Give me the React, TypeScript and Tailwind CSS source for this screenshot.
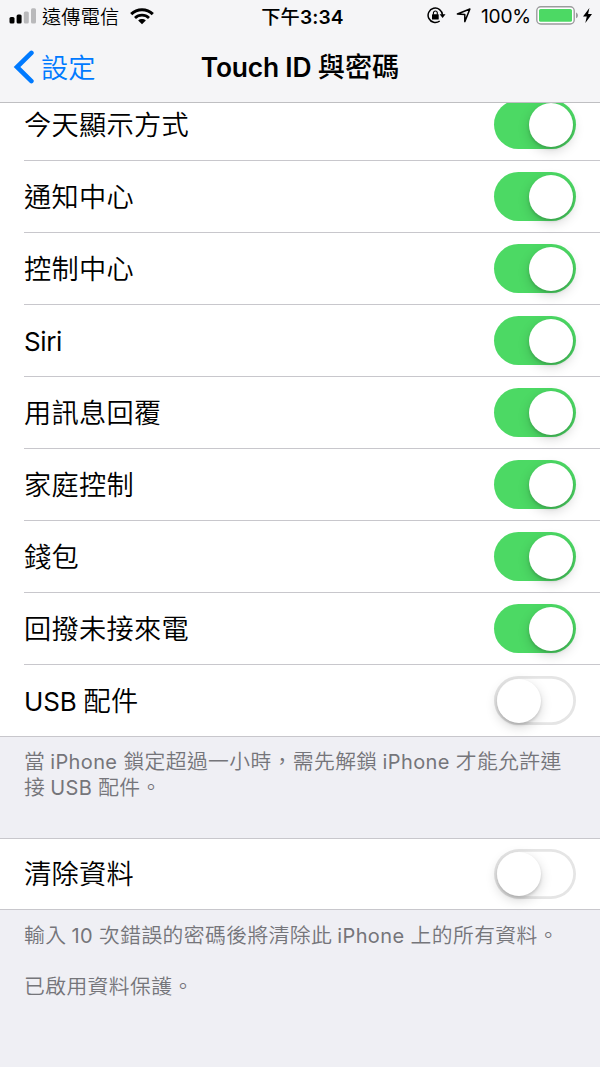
import type { ReactNode } from "react";

const CJK = "font-['Noto_Sans_CJK_TC',sans-serif]";

function La({ children, className = "font-normal" }: { children: ReactNode; className?: string }) {
  return <span className={`font-['Inter','Noto_Sans_CJK_TC',sans-serif] leading-none ${className}`}>{children}</span>;
}

function Toggle({ on }: { on: boolean }) {
  return (
    <span
      role="switch"
      aria-checked={on}
      className={
        on
          ? "flex h-[49.6px] w-[81.6px] shrink-0 items-center justify-end rounded-full bg-[#4cd964] px-[2.6px]"
          : "flex h-[49.6px] w-[81.6px] shrink-0 items-center justify-start rounded-full bg-white shadow-[inset_0_0_0_2.8px_#e5e5e5] px-[2.6px]"
      }
    >
      <span className="size-[44px] rounded-full bg-white shadow-[0_4px_12px_rgba(0,0,0,0.17),0_2px_3px_rgba(0,0,0,0.14)]" />
    </span>
  );
}

function Row({ label, on, last = false, height = "h-[72px]" }: { label: ReactNode; on: boolean; last?: boolean; height?: string }) {
  return (
    <div className={`${height} shrink-0 pl-6 ${last ? "border-b border-[#c8c7cc]" : ""}`}>
      <div className={`flex h-full items-center justify-between pr-6 ${last ? "" : "border-b border-[#c8c7cc]"}`}>
        <span className="whitespace-nowrap pb-[4px] text-[27.2px] font-[350] leading-[40px] tracking-[0.3px] text-black">
          {label}
        </span>
        <Toggle on={on} />
      </div>
    </div>
  );
}

function StatusBar() {
  return (
    <div className="grid h-8 grid-cols-3 items-center pl-[9px] pr-2 text-[19.2px] leading-[30px] text-black">
      <div className="flex items-center whitespace-nowrap">
        <svg width="28" height="16" viewBox="0 0 28 16" className="shrink-0">
          <rect x="0.5" y="9" width="5" height="6.5" rx="1.5" fill="#000" />
          <rect x="7.6" y="6.4" width="5" height="9.1" rx="1.5" fill="#000" />
          <rect x="14.8" y="3.4" width="5" height="12.1" rx="1.5" fill="#b9b9bb" />
          <rect x="22" y="0.3" width="5" height="15.2" rx="1.5" fill="#b9b9bb" />
        </svg>
        <span className="ml-[5px] font-[350] tracking-[0.15px]">遠傳電信</span>
        <svg width="24" height="17" viewBox="0 0 24 17" className="ml-[11px] shrink-0" fill="none" stroke="#000">
          <path d="M1.2 6.1C7.2 .2 16.8 .2 22.8 6.1" strokeWidth="3" />
          <path d="M5 10C9 6.2 15 6.2 19 10" strokeWidth="2.8" />
          <path d="M12 16.2L8.2 12.5C10.3 10.6 13.7 10.6 15.8 12.5Z" fill="#000" stroke="none" />
        </svg>
      </div>
      <div className="whitespace-nowrap pb-[1px] pl-[4px] text-center font-medium tracking-[0.15px]">
        下午<La className="font-semibold">3:34</La>
      </div>
      <div className="flex items-center justify-end whitespace-nowrap">
        <svg width="19" height="17" viewBox="0 0 19 17" className="shrink-0" fill="none" stroke="#000" strokeWidth="1.5">
          <path d="M15.5 8A7.2 7.2 0 1 0 12.7 14" />
          <path d="M12.6 7.2H18.5L15.6 10.9Z" fill="#000" stroke="none" />
          <rect x="5" y="7.2" width="6.7" height="5.2" rx=".5" fill="#000" stroke="none" />
          <path d="M6.4 7.7V6A1.95 1.95 0 0 1 10.3 6V7.7" strokeWidth="1.1" />
        </svg>
        <svg width="15" height="15" viewBox="0 0 15 15" className="ml-[10px] shrink-0" fill="none" stroke="#000" strokeWidth="1.5" strokeLinejoin="round">
          <path d="M13.9 1L8.8 13.6V6.5L1.4 6Z" />
        </svg>
        <La className="ml-[10px] pt-[1px] tracking-[-0.2px]">100%</La>
        <svg width="43" height="19" viewBox="0 0 43 19" className="ml-[5px] shrink-0">
          <rect x=".8" y=".8" width="37.4" height="17.2" rx="4" fill="#fff" stroke="#9b9b9d" strokeWidth="1.4" />
          <rect x="3" y="3" width="33" height="12.8" rx="1.6" fill="#4cd964" />
          <path d="M40 6.5C42.6 7.4 42.6 11.4 40 12.3Z" fill="#9b9b9d" />
        </svg>
        <svg width="9" height="15" viewBox="0 0 9 15" className="ml-[4px] shrink-0">
          <path d="M6.4 0L0 8.6H3.8L2.3 15L9 6.1H5.1Z" fill="#000" />
        </svg>
      </div>
    </div>
  );
}

function NavBar() {
  return (
    <div className="grid h-[70px] grid-cols-[100px_1fr_100px] items-center">
      <div className="flex items-center whitespace-nowrap pl-[13px] text-[27.2px] font-[350] leading-10 text-[#007aff]">
        <svg width="22" height="34" viewBox="0 0 22 34" className="shrink-0" fill="none" stroke="#007aff" strokeWidth="4.6" strokeLinecap="round" strokeLinejoin="miter">
          <path d="M18.4 2.9L4 17L18.4 31.1" />
        </svg>
        <span className="ml-[6px] pb-[3px]">設定</span>
      </div>
      <h1 className="whitespace-nowrap pb-[4px] text-center text-[27.2px] font-medium leading-10 text-black">
        <La className="text-[26.4px] font-semibold tracking-[-0.2px]">Touch ID </La>與密碼
      </h1>
    </div>
  );
}

const rows: { label: ReactNode; on: boolean }[] = [
  { label: "今天顯示方式", on: true },
  { label: "通知中心", on: true },
  { label: "控制中心", on: true },
  { label: <La className="pb-[2px] text-[26px] font-normal tracking-[-0.4px]">Siri</La>, on: true },
  { label: "用訊息回覆", on: true },
  { label: "家庭控制", on: true },
  { label: "錢包", on: true },
  { label: "回撥未接來電", on: true },
  { label: <><La className="text-[26px] font-normal tracking-[-0.2px]">USB </La>配件</>, on: false },
];

export default function App() {
  return (
    <div lang="zh-Hant" className={`flex h-[1067px] w-[600px] flex-col overflow-hidden bg-[#efeff4] ${CJK}`}>
      <header className="h-[103px] shrink-0 border-b border-[#bfbfc2] bg-[#f5f5f7]">
        <StatusBar />
        <NavBar />
      </header>
      <section className="flex h-[634px] shrink-0 flex-col justify-end overflow-hidden bg-white">
        {rows.map((r, i) => (
          <Row key={i} label={r.label} on={r.on} last={i === rows.length - 1} />
        ))}
      </section>
      <div className="h-[101px] shrink-0 whitespace-nowrap px-6 pt-[11px] text-[20.8px] font-[350] leading-[25.6px] tracking-[0.38px] text-[#75757a]">
        <p>
          當 <La className="text-[20px] font-normal">iPhone </La>鎖定超過一小時，需先解鎖 <La className="text-[20px] font-normal">iPhone </La>才能允許連
        </p>
        <p>
          接 <La className="text-[20px] font-normal">USB </La>配件。
        </p>
      </div>
      <section className="shrink-0 border-t border-[#c8c7cc] bg-white">
        <Row label="清除資料" on={false} last height="h-[71px]" />
      </section>
      <div className="whitespace-nowrap px-6 pt-3 text-[20.8px] font-[350] leading-[25.6px] tracking-[0.4px] text-[#75757a]">
        <p>
          輸入 <La className="text-[20px] font-normal">10 </La>次錯誤的密碼後將清除此 <La className="text-[20px] font-normal">iPhone </La>上的所有資料。
        </p>
        <p className="mt-[25.6px]">已啟用資料保護。</p>
      </div>
    </div>
  );
}
